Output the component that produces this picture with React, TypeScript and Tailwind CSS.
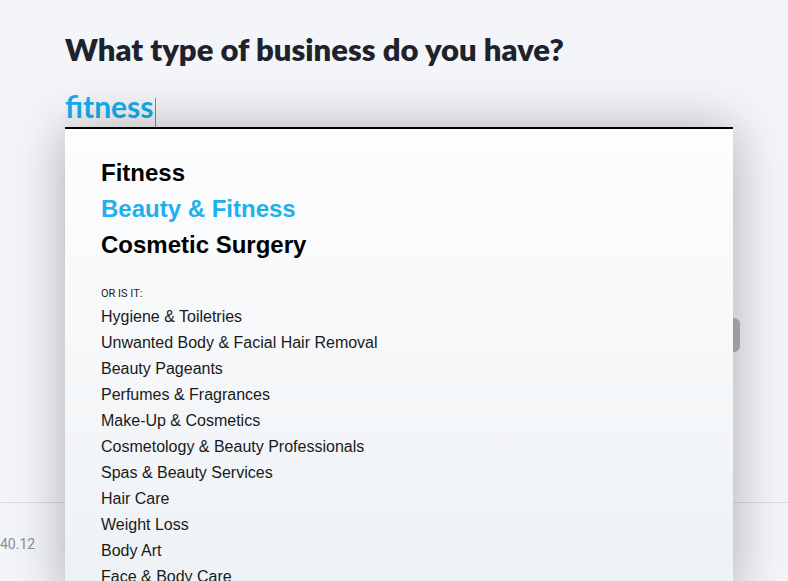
import React from "react";

const suggestions = ["Fitness", "Beauty & Fitness", "Cosmetic Surgery"];

const related = [
  "Hygiene & Toiletries",
  "Unwanted Body & Facial Hair Removal",
  "Beauty Pageants",
  "Perfumes & Fragrances",
  "Make-Up & Cosmetics",
  "Cosmetology & Beauty Professionals",
  "Spas & Beauty Services",
  "Hair Care",
  "Weight Loss",
  "Body Art",
  "Face & Body Care",
];

export default function App() {
  return (
    <div className="relative h-[581px] w-full overflow-hidden bg-[#f4f5f8]">
      {/* page behind the dropdown */}
      <div className="px-[65px] pt-[31px]">
        <h1 className="font-['Lato',sans-serif] text-[31px] font-extrabold leading-[36px] text-[#1d222c]">
          What type of business do you have?
        </h1>
        <div className="mt-[25px] flex h-[37px] w-[668px] items-end border-b-2 border-black pb-[6px]">
          <span className="font-['Lato',sans-serif] text-[30px] font-bold leading-[30px] text-[#16adf0]">fitness</span>
          <span className="mb-[-6px] ml-[1px] h-[29px] w-px bg-[#16adf0]" />
        </div>
      </div>
      <div className="mt-[189px] flex justify-end pr-[48px]">
        <div className="h-[34px] w-[120px] rounded-md bg-[#b4b7bb]" />
      </div>
      <div className="mt-[150px] border-t border-[#d6d9de]">
        <p className="mt-[31px] font-['Roboto',sans-serif] text-[14px] text-[#8a8f96]">40.12</p>
      </div>

      {/* dropdown overlay */}
      <div className="absolute left-[65px] top-[129px] h-[470px] w-[668px] bg-gradient-to-b from-[#fdfdfe] to-[#eef2f5] pl-[36px] pt-[26px] shadow-[0_0_50px_rgba(0,0,0,0.3)]">
        <ul className="font-['Liberation_Sans',Arial,sans-serif] text-[24px] font-bold leading-[36px]">
          {suggestions.map((s, i) => (
            <li key={s} className={i === 1 ? "text-[#1eb0ee]" : "text-black"}>
              {s}
            </li>
          ))}
        </ul>
        <p className="mt-[22px] font-['Roboto',sans-serif] text-[11px] leading-[18px] text-[#222]">OR IS IT:</p>
        <ul className="mt-px font-['Liberation_Sans',Arial,sans-serif] text-[16px] leading-[26px] text-[#1a1a1a]">
          {related.map((r) => (
            <li key={r}>{r}</li>
          ))}
        </ul>
      </div>
    </div>
  );
}
